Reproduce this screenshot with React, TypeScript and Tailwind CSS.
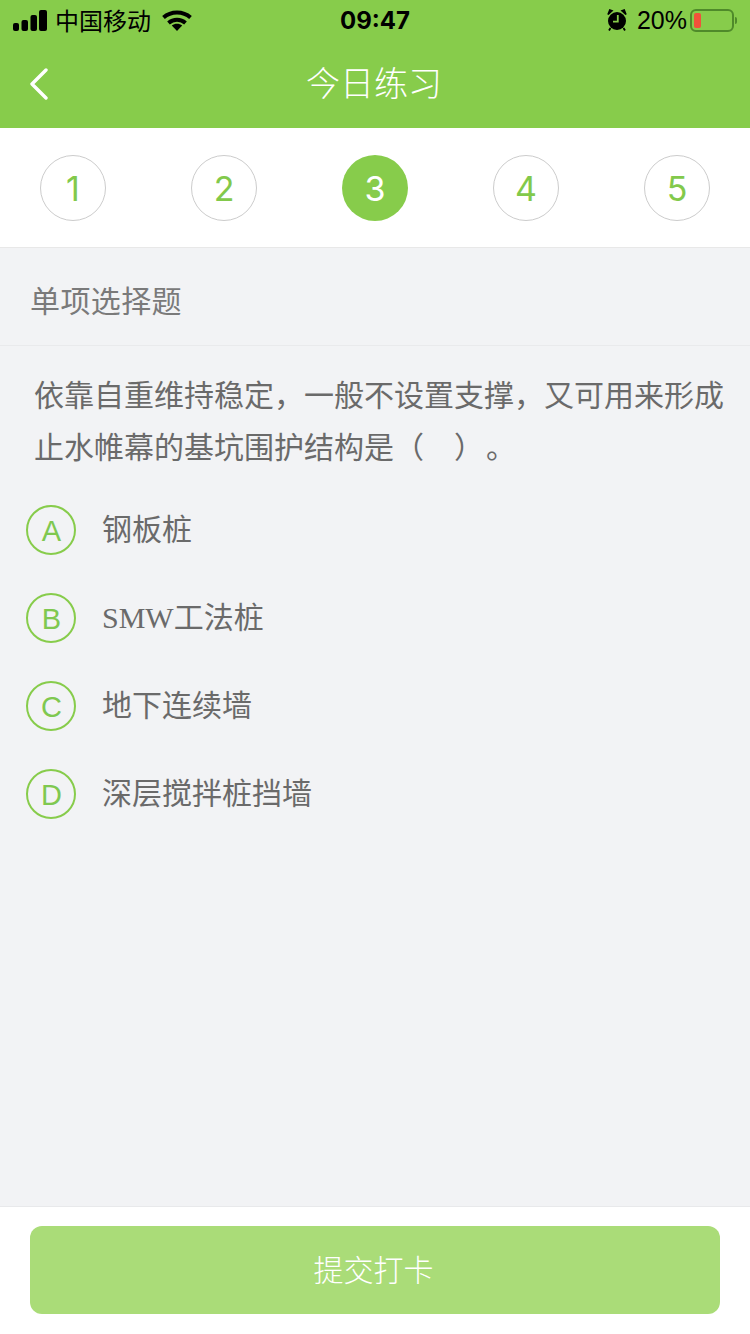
const sans = "font-['Liberation_Sans','Noto_Sans_CJK_SC',sans-serif]";

function Signal() {
  return (
    <svg width="34" height="21" viewBox="0 0 34 21" fill="#000">
      <rect x="0" y="13" width="6" height="8" rx="2" />
      <rect x="8.5" y="10" width="6.5" height="11" rx="2" />
      <rect x="17.5" y="5" width="6.5" height="16" rx="2" />
      <rect x="26" y="0" width="8" height="21" rx="2" />
    </svg>
  );
}

function Wifi() {
  return (
    <svg width="30" height="21" viewBox="0 0 30 21" fill="none" stroke="#000">
      <path d="M1.5 7.5C9 .8 21 .8 28.5 7.5" strokeWidth="4" />
      <path d="M6.5 13c4.8-4.2 12.2-4.2 17 0" strokeWidth="4" />
      <path d="M15 21l-5.2-5.4c3-2.4 7.4-2.4 10.4 0z" fill="#000" stroke="none" />
    </svg>
  );
}

function Alarm() {
  return (
    <svg width="20" height="22" viewBox="0 0 20 22">
      <circle cx="10" cy="12" r="9" fill="#000" />
      <path d="M1 5.5 5 1.8 2.8 1zM19 5.5 15 1.8 17.2 1z" fill="#000" stroke="#000" strokeWidth="1.6" />
      <path d="M3.5 19 2 21.5M16.5 19l1.5 2.5" stroke="#000" strokeWidth="1.8" />
      <path d="M10.8 6v6.6H6" fill="none" stroke="#87cc4b" strokeWidth="1.8" />
    </svg>
  );
}

function Battery() {
  return (
    <div className="flex items-center gap-[1px]">
      <div className="w-[44px] h-[23px] rounded-[6px] border-2 border-[#4f8a2a] p-[2px]">
        <div className="w-[7px] h-full rounded-[2px] bg-[#f0523a]" />
      </div>
      <div className="w-[2px] h-[7px] rounded-r-sm bg-[#4f8a2a]" />
    </div>
  );
}

function Step({ n, active }: { n: number; active?: boolean }) {
  return (
    <div
      className={
        active
          ? "w-[66px] h-[66px] rounded-full bg-[#87cc4b] text-white flex items-center justify-center text-[34px]"
          : "w-[66px] h-[66px] rounded-full border border-[#cccccc] text-[#82c94b] flex items-center justify-center text-[34px]"
      }
    >
      {n}
    </div>
  );
}

function Option({ letter, children }: { letter: string; children: React.ReactNode }) {
  return (
    <div className="h-[88px] flex items-center pl-[26px]">
      <div className="w-[50px] h-[50px] rounded-full border-2 border-[#87cc4b] text-[#7fc850] pl-[1px] pt-[3px] flex items-center justify-center text-[29px]">
        {letter}
      </div>
      <div className="ml-[26px] text-[30px] text-[#6a6a6a] leading-[40px]">{children}</div>
    </div>
  );
}

export default function App() {
  return (
    <div className={`w-[750px] h-[1334px] flex flex-col bg-[#f2f3f5] overflow-hidden ${sans}`}>
      <header className="h-[128px] bg-[#87cc4b] flex flex-col shrink-0">
        <div className="h-[40px] grid grid-cols-3 items-center px-[13px] text-black">
          <div className="flex items-center">
            <Signal />
            <span className="ml-[8px] text-[24px] leading-none font-['Noto_Sans_CJK_SC',sans-serif]">中国移动</span>
            <span className="ml-[11px] flex"><Wifi /></span>
          </div>
          <div className="text-center text-[24px] font-bold pt-[2px] font-['Inter',sans-serif]">09:47</div>
          <div className="flex items-center justify-end">
            <Alarm />
            <span className="ml-[10px] mr-[3px] text-[25px] leading-none font-['Liberation_Sans',sans-serif]">20%</span>
            <Battery />
          </div>
        </div>
        <div className="relative flex-1 flex items-center justify-center">
          <svg className="absolute left-[30px] top-[28px]" width="18" height="32" viewBox="0 0 18 32" fill="none" stroke="#fff" strokeWidth="3.4" strokeLinecap="round" strokeLinejoin="round">
            <path d="M16 2 2 16l14 14" />
          </svg>
          <h1 className="text-[34px] leading-none text-white font-light font-['Noto_Sans_CJK_SC',sans-serif] mb-[4px] mr-[2px]">今日练习</h1>
        </div>
      </header>

      <div className="h-[120px] shrink-0 bg-white border-b border-[#e8e8e8] px-[40px] pt-[1px] flex items-center justify-between font-['Inter','Liberation_Sans',sans-serif]">
        <Step n={1} />
        <Step n={2} />
        <Step n={3} active />
        <Step n={4} />
        <Step n={5} />
      </div>

      <div className="h-[98px] shrink-0 border-b border-[#e9eaec] pl-[30px] pt-[9px] flex items-center text-[30px] tracking-[0.4px] text-[#7a7a7a]">
        单项选择题
      </div>

      <main className="flex-1">
        <p className="pl-[34px] w-[728px] pt-[24px] text-[30px] leading-[52px] text-[#6a6a6a]">
          依靠自重维持稳定，一般不设置支撑，又可用来形成止水帷幕的基坑围护结构是（　）<span className="ml-[17px]">。</span>
        </p>
        <div className="pt-[12px]">
          <Option letter="A">钢板桩</Option>
          <Option letter="B"><span className="font-['Liberation_Serif','Noto_Sans_CJK_SC',serif]">SMW</span>工法桩</Option>
          <Option letter="C">地下连续墙</Option>
          <Option letter="D">深层搅拌桩挡墙</Option>
        </div>
      </main>

      <footer className="h-[128px] shrink-0 bg-white border-t border-[#e8e9eb] px-[30px] pt-[19px]">
        <button className="w-full h-[88px] rounded-[12px] bg-[#aadc78] text-white text-[30px] font-light pr-[3px]">提交打卡</button>
      </footer>
    </div>
  );
}
